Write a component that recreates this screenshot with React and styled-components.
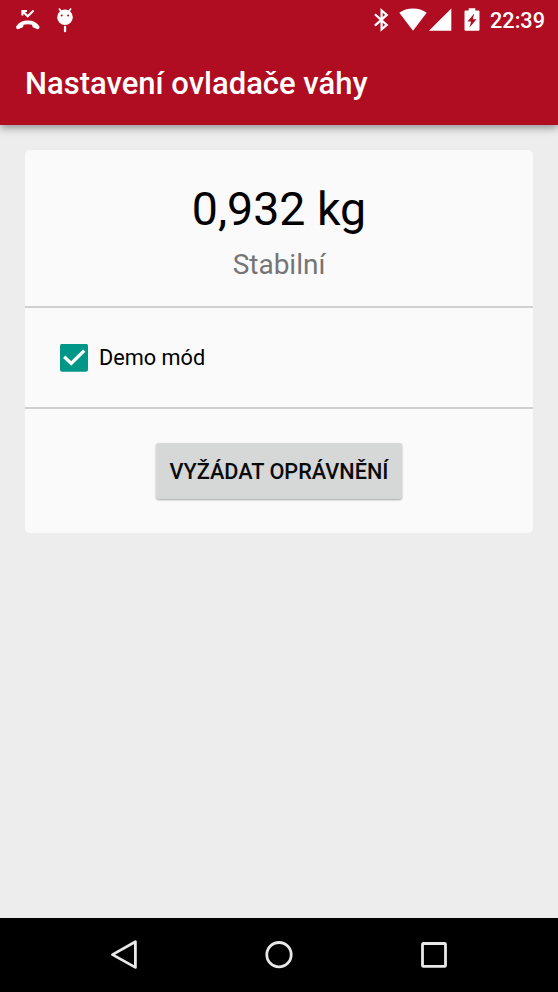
import styled, { createGlobalStyle } from "styled-components"

const GlobalStyle = createGlobalStyle`
    * {
        box-sizing: border-box;
    }
    body {
        margin: 0;
        background-color: #ededed;
        font-family: Roboto, "Noto Sans", sans-serif;
    }
`

const Screen = styled.div`
    display: flex;
    flex-direction: column;
    width: 558px;
    height: 992px;
    overflow: hidden;
    background-color: #ededed;
`

const Header = styled.header`
    flex: none;
    height: 125px;
    color: #fff;
    background-color: #b00c22;
    box-shadow: 0 3px 8px rgba(0, 0, 0, 0.38);
`

const StatusBar = styled.div`
    display: flex;
    justify-content: space-between;
    height: 40px;
    padding: 0 12px 0 16px;
`

const StatusGroup = styled.div`
    display: flex;
    align-items: center;
`

const StatusIcon = styled.svg`
    display: block;
    flex: none;
    margin-right: ${({ $gap }) => $gap || 0}px;
    fill: #fff;
`

const Clock = styled.span`
    font-size: 21.7px;
    font-weight: 500;
    line-height: 41px;
    width: 56px;
    white-space: nowrap;
`

const Title = styled.h1`
    margin: 0;
    padding-left: 25px;
    font-size: 31px;
    font-weight: 500;
    line-height: 88px;
    white-space: nowrap;
`

const Content = styled.main`
    flex: 1;
    padding: 25px 25px 0;
`

const Card = styled.div`
    border-radius: 5px;
    background-color: #fafafa;
`

const Section = styled.section`
    display: flex;
    flex-direction: ${({ $column }) => ($column ? "column" : "row")};
    align-items: center;
    justify-content: ${({ $start }) => ($start ? "flex-start" : "center")};
    height: ${({ $height }) => $height}px;
    padding: ${({ $start }) => ($start ? "0 35px" : "0")};

    & + & {
        border-top: 2px solid #d0d0d0;
    }
`

const Weight = styled.div`
    font-size: 46.5px;
    line-height: 56px;
    margin-top: 7px;
    color: #000;
`

const State = styled.div`
    font-size: 28px;
    line-height: 34px;
    margin-top: 11px;
    color: #757575;
`

const CheckLabel = styled.label`
    display: flex;
    align-items: center;
    gap: 11px;
    font-size: 21.7px;
    line-height: 28px;
    color: #000;
`

const CheckBox = styled.svg`
    display: block;
    width: 28px;
    height: 28px;
`

const RequestButton = styled.button`
    width: 246px;
    height: 56px;
    padding: 0;
    border: none;
    border-radius: 3px;
    font-family: inherit;
    font-size: 21.7px;
    font-weight: 500;
    white-space: nowrap;
    color: #0b0b0b;
    background-color: #d6d7d7;
    box-shadow: 0 1px 2px rgba(0, 0, 0, 0.35);
`

const NavBar = styled.nav`
    display: flex;
    flex: none;
    align-items: center;
    justify-content: center;
    gap: 127px;
    height: 74px;
    background-color: #000;
`

const NavIcon = styled.svg`
    display: block;
    width: 28px;
    height: 30px;
    fill: none;
    stroke: #e8e8e8;
    stroke-width: 2.8;
    stroke-linejoin: round;
`

const MissedCallIcon = () => (
    <StatusIcon width="24" height="22" viewBox="0 0 24 22" $gap={17}>
        <path d="M0.6 16.8C3 13.4 7 11.6 11.8 11.6S20.6 13.4 23 16.8C23.8 18 23.6 19 22.8 19.8Q22.4 20.4 21.6 20.2L17.3 18.4Q16.2 17.9 16.2 16.8V15.8C13.4 15.1 10.2 15.1 7.4 15.8V16.8Q7.4 17.9 6.3 18.4L2 20.2Q1.2 20.4 0.8 19.8C0 19 -0.2 18 0.6 16.8Z" />
        <path d="M6.4 6.6V2H11M6.6 2.2L11.7 7.3L17.6 1.4" fill="none" stroke="#fff" strokeWidth="2.1" />
    </StatusIcon>
)

// lollipop shaped android head, shown while usb debugging is on
const DebugIcon = () => (
    <StatusIcon width="16" height="26" viewBox="0 0 16 26">
        <path d="M2 1.6L4.6 5M14 1.6L11.4 5" stroke="#fff" strokeWidth="1.7" />
        <circle cx="8" cy="10.3" r="7.8" />
        <rect x="6.9" y="18.7" width="2.3" height="6.6" rx="1" />
        <circle cx="4.7" cy="8.4" r="1" fill="#b00c22" />
        <circle cx="11.1" cy="8.4" r="1" fill="#b00c22" />
    </StatusIcon>
)

const BluetoothIcon = () => (
    <StatusIcon width="15" height="24" viewBox="0 0 15 24" $gap={10}>
        <path
            d="M0.9 6.2L12.8 16.9L7.6 21.4V2.4L12.8 6.9L0.9 17.6"
            fill="none"
            stroke="#fff"
            strokeWidth="2.2"
        />
    </StatusIcon>
)

const WifiIcon = () => (
    <StatusIcon width="28" height="24" viewBox="0 0 28 24" $gap={2}>
        <path d="M14 22.7L0.3 4.8C4 1.8 8.7 0.4 14 0.4S24 1.8 27.7 4.8Z" />
    </StatusIcon>
)

const SignalIcon = () => (
    <StatusIcon width="23" height="24" viewBox="0 0 23 24" $gap={12}>
        <path d="M0 22.7H22.3V0.4Z" />
    </StatusIcon>
)

const BatteryIcon = () => (
    <StatusIcon width="16" height="24" viewBox="0 0 16 24" $gap={10}>
        <path d="M1.5 2.5H4.7V0.2H11.3V2.5H14.5Q15.5 2.5 15.5 3.5V21.7Q15.5 22.7 14.5 22.7H1.5Q0.5 22.7 0.5 21.7V3.5Q0.5 2.5 1.5 2.5Z" />
        <path d="M10.2 5.5L3.5 13.5H7.1L5.5 19.5L12.5 11.3H8.8Z" fill="#b00c22" />
    </StatusIcon>
)

const App = () => {
    return (
        <>
            <GlobalStyle />
            <Screen>
                <Header>
                    <StatusBar>
                        <StatusGroup>
                            <MissedCallIcon />
                            <DebugIcon />
                        </StatusGroup>
                        <StatusGroup>
                            <BluetoothIcon />
                            <WifiIcon />
                            <SignalIcon />
                            <BatteryIcon />
                            <Clock>22:39</Clock>
                        </StatusGroup>
                    </StatusBar>
                    <Title>Nastavení ovladače váhy</Title>
                </Header>
                <Content>
                    <Card>
                        <Section $column $height={156}>
                            <Weight>0,932 kg</Weight>
                            <State>Stabilní</State>
                        </Section>
                        <Section $start $height={101}>
                            <CheckLabel>
                                <CheckBox viewBox="0 0 28 28">
                                    <rect y="-0.3" width="28" height="28" rx="2.5" fill="#009688" />
                                    <path d="M4.2 12.8L11.2 19.4L24.2 6.6" fill="none" stroke="#fff" strokeWidth="3.3" />
                                </CheckBox>
                                Demo mód
                            </CheckLabel>
                        </Section>
                        <Section $height={126}>
                            <RequestButton>VYŽÁDAT OPRÁVNĚNÍ</RequestButton>
                        </Section>
                    </Card>
                </Content>
                <NavBar>
                    <NavIcon viewBox="0 0 28 30">
                        <path d="M2.5 14.6L25.4 1.8V27.4Z" />
                    </NavIcon>
                    <NavIcon viewBox="0 0 28 30">
                        <circle cx="14" cy="14.7" r="12.2" />
                    </NavIcon>
                    <NavIcon viewBox="0 0 28 30">
                        <rect x="2.5" y="3.5" width="23" height="22.8" rx="0.8" />
                    </NavIcon>
                </NavBar>
            </Screen>
        </>
    )
}

export default App
